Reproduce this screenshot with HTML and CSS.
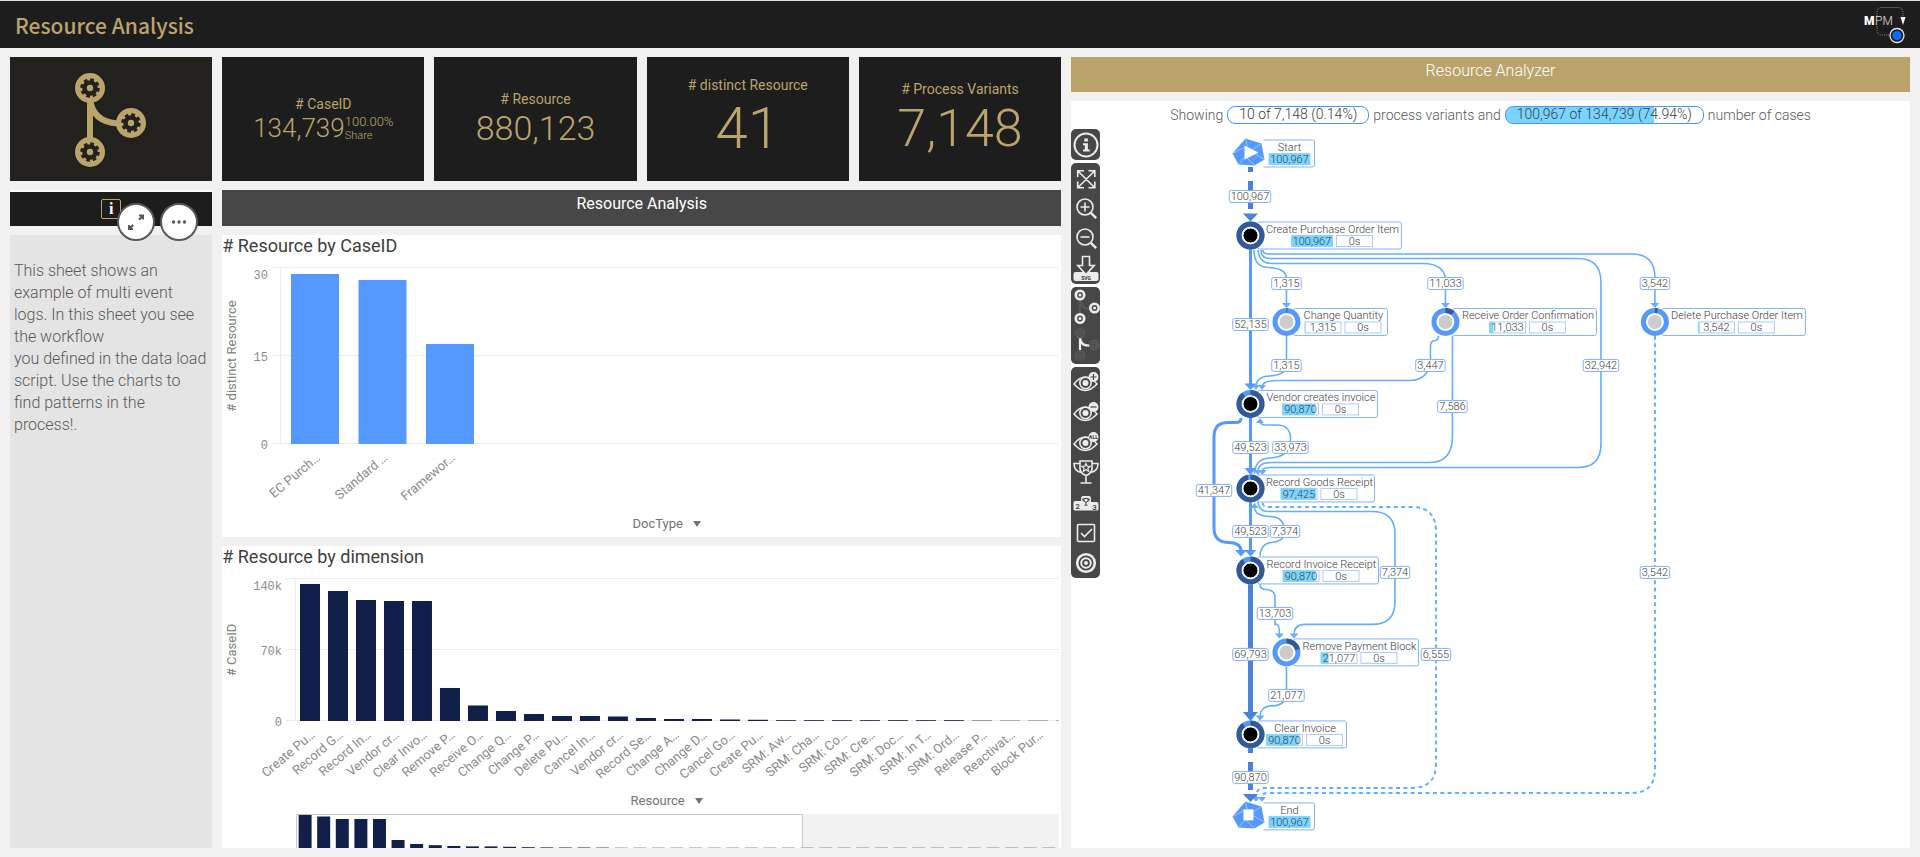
FILE: index.html
```html
<!DOCTYPE html>
<html lang="en">
<head>
<meta charset="utf-8">
<title>Resource Analysis</title>
<link rel="stylesheet" href="styles.css">
</head>
<body>
<header class="topbar">
  <h1 class="topbar-title">Resource Analysis</h1>
  <svg class="brand" width="44" height="40" viewBox="1862 4 44 40" role="img" aria-label="MPM">
    <path class="brand-frame" d="M1877 15V11Q1877 6.500 1882 6.500H1898Q1903 6.500 1903 12V17M1877 25V29Q1877 34 1882 34H1889"/>
    <text class="brand-bold" x="1864" y="24">M</text>
    <text class="brand-thin" x="1875" y="24">PM</text>
    <path fill="#fff" d="M1900.500 16h5l-2.500 8z"/>
    <circle cx="1897" cy="34.500" r="7" fill="#1d1d1d" stroke="#e8e8e8" stroke-width="1.300"/>
    <circle cx="1897" cy="34.500" r="4.600" fill="#0a6cff"/>
  </svg>
</header>

<main class="dashboard">
  <section class="side">
    <div class="logo-tile">
      <svg width="76" height="96" viewBox="73 70 76 96" aria-hidden="true">
        <defs>
          <g id="cog">
            <circle r="15" fill="#baa46c"/>
            <circle r="5.500" fill="none" stroke="#23211d" stroke-width="4.600"/>
            <circle r="8.300" fill="none" stroke="#23211d" stroke-width="3" stroke-dasharray="3.600 2.919"/>
          </g>
        </defs>
        <path d="M90 90V150M90 97Q92 121 118 122.500" fill="none" stroke="#baa46c" stroke-width="6"/>
        <use href="#cog" x="90" y="87"/>
        <use href="#cog" x="131" y="122"/>
        <use href="#cog" x="90" y="151"/>
      </svg>
    </div>
    <div class="info-tile">
      <span class="info-badge">i</span>
      <div class="hover-actions">
        <button class="round-button" type="button" aria-label="Full screen">
          <svg width="20" height="20" viewBox="0 0 20 20"><path fill="#595959" d="M13 2.500H18V7.500H16.800L15.800 6.500 13.800 8.500 12.300 7 14.200 5 13 3.800zM2 13H3.300L4.500 14 6.400 12.200 7.900 13.700 6 15.500 7.200 16.700V18H2z"/></svg>
        </button>
        <button class="round-button" type="button" aria-label="More">
          <svg width="20" height="20" viewBox="0 0 20 20" fill="#595959"><circle cx="4.500" cy="10" r="1.700"/><circle cx="10" cy="10" r="1.700"/><circle cx="15.500" cy="10" r="1.700"/></svg>
        </button>
      </div>
    </div>
    <p class="notes">This sheet shows an example of multi event logs. In this sheet you see the workflow<br>you defined in the data load script. Use the charts to find patterns in the process!.</p>
  </section>

  <section class="center">
    <div class="kpis">
      <div class="kpi">
        <span class="kpi-name"># CaseID</span>
        <div class="kpi-line"><span class="kpi-value kpi-s">134,739</span><span class="kpi-share"><span>100.00%</span><small>Share</small></span></div>
      </div>
      <div class="kpi"><span class="kpi-name"># Resource</span><span class="kpi-value kpi-m">880,123</span></div>
      <div class="kpi"><span class="kpi-name"># distinct Resource</span><span class="kpi-value kpi-xl">41</span></div>
      <div class="kpi"><span class="kpi-name"># Process Variants</span><span class="kpi-value kpi-l">7,148</span></div>
    </div>
    <div class="banner">Resource Analysis</div>
    <article class="chart">
      <h2 class="chart-title"># Resource by CaseID</h2>
      <svg id="doc-chart" class="plot" viewBox="222 261 839 255"></svg>
      <button class="axis-button" type="button">DocType <span class="caret"></span></button>
    </article>
    <article class="chart">
      <h2 class="chart-title"># Resource by dimension</h2>
      <svg id="dim-chart" class="plot" viewBox="222 572 839 220"></svg>
      <button class="axis-button axis-button-tight" type="button">Resource <span class="caret"></span></button>
      <svg id="navigator" class="plot" viewBox="222 814 839 34"></svg>
    </article>
  </section>

  <section class="analyzer">
    <div class="banner banner-gold">Resource Analyzer</div>
    <div class="process">
      <div class="summary">
        <span>Showing</span>
        <span class="pill">10 of 7,148 (0.14%)</span>
        <span>process variants and</span>
        <span class="pill pill-filled">100,967 of 134,739 (74.94%)</span>
        <span>number of cases</span>
      </div>
      <div class="process-body">
        <nav class="tools" aria-label="Process tools">
          <div class="tool-group">
            <button class="tool" type="button" aria-label="Info"><svg viewBox="0 0 28 28"><circle cx="14" cy="14" r="11.500" stroke-width="2"/><path class="solid" d="M12.300 7.500h3.600v3h-3.600zM11 12.200h4.900v6.300h1.800v2h-6.700v-2h1.800v-4.300H11z"/></svg></button>
          </div>
          <div class="tool-group">
            <button class="tool" type="button" aria-label="Fit"><svg viewBox="0 0 28 28"><path d="M6 6l16.500 16.500M22.500 6L6 22.500M5.700 12V5.700H12M16.500 5.700h6.300V12M22.800 16.500v6.300h-6.300M12 22.800H5.700v-6.300"/></svg></button>
            <button class="tool" type="button" aria-label="Zoom in"><svg viewBox="0 0 28 28"><circle cx="13" cy="12" r="8"/><path d="M8.500 12h9M13 7.500v9"/><path stroke-width="2.400" d="M18.800 17.800l5.400 5.400"/></svg></button>
            <button class="tool" type="button" aria-label="Zoom out"><svg viewBox="0 0 28 28"><circle cx="13" cy="12" r="8"/><path d="M8.500 12h9"/><path stroke-width="2.400" d="M18.800 17.800l5.400 5.400"/></svg></button>
            <button class="tool" type="button" aria-label="Download SVG"><svg viewBox="0 0 28 28"><rect class="solid" x="1.500" y="17" width="25" height="9" rx="2"/><path fill="#474747" d="M10.500 1.500h7v9h4.700L14 19.500 5.800 10.500h4.700z"/><text class="tool-caption" x="14" y="24.600">SVG</text></svg></button>
          </div>
          <div class="tool-group">
            <button class="tool tool-tall" type="button" aria-label="Activities"><svg viewBox="0 0 28 36"><path stroke="#5c5c5c" d="M8 10v14M8 12q2 8 10 8"/><g stroke-width="2.600"><circle cx="8" cy="6" r="4.200"/><circle cx="22.500" cy="19" r="4.200"/><circle cx="8" cy="29.500" r="4.200"/></g><g class="solid"><circle cx="8" cy="6" r="1.500"/><circle cx="22.500" cy="19" r="1.500"/><circle cx="8" cy="29.500" r="1.500"/></g></svg></button>
            <button class="tool tool-tall" type="button" aria-label="Transitions"><svg viewBox="0 0 28 36"><path stroke-width="2.200" d="M8 11v12M8 11q1 8 9.500 7.500"/><g stroke="#5c5c5c"><circle cx="8" cy="6" r="4.500"/><circle cx="22.500" cy="18" r="4.500"/><circle cx="8" cy="28.500" r="4.500"/><circle cx="8" cy="6" r="2"/><circle cx="22.500" cy="18" r="2"/><circle cx="8" cy="28.500" r="2"/></g></svg></button>
          </div>
          <div class="tool-group">
            <button class="tool" type="button" aria-label="Show"><svg viewBox="0 0 28 28"><path d="M2 15Q13 1 25 15 13 28 2 15z"/><circle cx="13.500" cy="14" r="5.700"/><circle class="solid" cx="13.500" cy="14" r="3"/><circle class="solid" cx="21.500" cy="8" r="5"/><path stroke="#474747" stroke-width="1.200" d="M18.500 8h6M21.500 5v6"/></svg></button>
            <button class="tool" type="button" aria-label="Hide"><svg viewBox="0 0 28 28"><path d="M2 15Q13 1 25 15 13 28 2 15z"/><circle cx="13.500" cy="14" r="5.700"/><circle class="solid" cx="13.500" cy="14" r="3"/><circle class="solid" cx="21.500" cy="8" r="5"/><path stroke="#474747" stroke-width="1.200" d="M18.500 8h6"/></svg></button>
            <button class="tool" type="button" aria-label="Show all"><svg viewBox="0 0 28 28"><path d="M2 15Q13 1 25 15 13 28 2 15z"/><circle cx="13.500" cy="14" r="5.700"/><circle class="solid" cx="13.500" cy="14" r="3"/><circle class="solid" cx="21.500" cy="8" r="5"/><text class="tool-caption" x="21.500" y="10">ALL</text></svg></button>
            <button class="tool" type="button" aria-label="Best variant"><svg viewBox="0 0 28 28"><path d="M8 2h12v8q-1 5-6 6.500Q9 15 8 10zM8 4.500H2q0 8 7.500 9M20 4.500h6q0 8-7.500 9M14 16.500V24M8.500 24h11"/><path stroke-width="1.200" d="M14 4.500l1.200 2.600 2.900.3-2.200 1.900.7 2.900-2.600-1.500-2.600 1.500.7-2.900-2.200-1.900 2.900-.3z"/></svg></button>
            <button class="tool" type="button" aria-label="Ranking"><svg viewBox="0 0 28 28"><path class="solid" d="M3 12H9V10Q9 7 11 7H17Q19 7 19 10V13H25Q26.500 13 26.500 15V20Q26.500 21.500 25 21.500H3Q1.500 21.500 1.500 20V14Q1.500 12 3 12z"/><path stroke="#474747" stroke-width="1" d="M12 9.500h4v2.500q-2 3-4 0zM12 10h-1.500q0 2 2 2.500M16 10h1.500q0 2-2 2.500M14 13.500V16M12.500 16.200h3"/><text class="tool-digit" x="5.500" y="20">2</text><text class="tool-digit" x="22.500" y="20.500">3</text></svg></button>
            <button class="tool" type="button" aria-label="Select"><svg viewBox="0 0 28 28"><rect x="5.500" y="5.500" width="17" height="17" rx="1"/><path d="M9 14l3.500 3.500L20 10"/></svg></button>
            <button class="tool" type="button" aria-label="Target"><svg viewBox="0 0 28 28"><circle cx="14" cy="14" r="8.800" stroke-width="2.600"/><circle cx="14" cy="14" r="4.800" stroke-width="2"/><circle class="solid" cx="14" cy="14" r="2"/></svg></button>
          </div>
        </nav>
        <svg id="graph" class="graph" viewBox="1100 129 810 719"></svg>
      </div>
    </div>
  </section>
</main>
<script src="script.js"></script>
</body>
</html>
```
FILE: styles.css
```css
* { box-sizing: border-box; }
body {
  margin: 0;
  min-height: 100vh;
  background: #f1f1f1;
  color: #595959;
  font-family: Roboto, "Liberation Sans", sans-serif;
  font-weight: 300;
}
button { font: inherit; color: inherit; padding: 0; border: 0; background: none; cursor: pointer; }
svg { display: block; }

.topbar {
  display: flex;
  align-items: center;
  justify-content: space-between;
  height: 48px;
  padding: 0 14px 0 15px;
  border-top: 1px solid #dcdfdf;
  background: #1d1d1d;
}
.topbar-title {
  margin: 0;
  color: #baa46c;
  font: 500 21px/30px "Noto Sans CJK JP", "Noto Sans", sans-serif;
}
.brand-frame { fill: none; stroke: #8a8a8a; stroke-width: 1; stroke-dasharray: 1 1; }
.brand-bold { font-size: 12px; font-weight: 900; fill: #fff; }
.brand-thin { font-size: 12px; font-weight: 300; fill: #e0e0e0; }

.dashboard {
  display: grid;
  grid-template-columns: repeat(9, minmax(0, 1fr));
  gap: 10px;
  padding: 9px 10px;
}
.side, .center, .analyzer { display: flex; flex-direction: column; gap: 9px; }
.center, .analyzer { grid-column: span 4; }

.logo-tile {
  display: flex;
  align-items: center;
  justify-content: center;
  height: 124px;
  background: #23211d;
}
.info-tile {
  position: relative;
  display: flex;
  justify-content: center;
  height: 36px;
  padding-top: 7px;
  border-top: 2px solid #fbfbfb;
  background: #1d1d1d;
}
.info-badge {
  width: 20px;
  height: 20px;
  border: 1px solid #baa46c;
  border-radius: 2px;
  color: #fff;
  font: 700 16px/18px "Liberation Serif", serif;
  text-align: center;
}
.hover-actions { position: absolute; top: 11px; right: 14px; display: flex; gap: 5px; }
.round-button {
  display: flex;
  align-items: center;
  justify-content: center;
  width: 38px;
  height: 38px;
  border: 2px solid #595959;
  border-radius: 50%;
  background: #fff;
}
.notes {
  flex: 1;
  margin: 0;
  padding: 25px 4px;
  background: #e4e4e4;
  font-size: 16px;
  line-height: 22px;
}

.kpis { display: grid; grid-template-columns: repeat(4, minmax(0, 1fr)); gap: 10px; }
.kpi {
  display: flex;
  flex-direction: column;
  align-items: center;
  justify-content: center;
  height: 124px;
  background: #1d1d1d;
  color: #baa46c;
}
.kpi-name { font-size: 14px; line-height: 18px; font-weight: 400; }
.kpi-line { display: flex; align-items: center; }
.kpi-s { font-size: 26px; }
.kpi-m { font-size: 34px; }
.kpi-l { font-size: 52px; }
.kpi-xl { font-size: 58px; }
.kpi-share { display: flex; flex-direction: column; font-size: 13px; line-height: 14px; }
.kpi-share small { font-size: 11px; line-height: 13px; }

.banner {
  height: 36px;
  padding-top: 4px;
  background: #474747;
  color: #fff;
  font-size: 16px;
  line-height: 20px;
  font-weight: 400;
  text-align: center;
}
.banner-gold { height: 35px; background: #baa46c; font-weight: 300; }

.chart { display: flex; flex-direction: column; background: #fff; }
.chart-title {
  height: 26px;
  margin: 0;
  color: #404040;
  font-size: 18px;
  line-height: 22px;
  font-weight: 400;
}
.plot { width: 100%; height: auto; }
.axis-button {
  display: flex;
  align-items: center;
  align-self: center;
  gap: 10px;
  height: 16px;
  margin-bottom: 5px;
  padding-left: 50px;
  color: #737373;
  font-size: 13px;
  line-height: 16px;
  font-weight: 400;
}
.axis-button-tight { height: 18px; margin-bottom: 4px; }
.caret { border: 4px solid transparent; border-top: 6px solid #737373; border-bottom: 0; }
.grid-line { stroke: #ececec; }
.axis-number { fill: #8c8c8c; font: 400 12px "Liberation Mono", monospace; text-anchor: end; }
.axis-label { fill: #8c8c8c; font-size: 13px; font-weight: 400; text-anchor: end; }
.axis-title { fill: #808080; font-size: 13px; font-weight: 400; text-anchor: middle; }
.bar-blue { fill: #5599ff; }
.bar-navy { fill: #10204a; }

.process { flex: 1; background: #fff; }
.summary {
  display: flex;
  align-items: center;
  justify-content: center;
  gap: 4px;
  height: 28px;
  font-size: 14px;
}
.pill {
  height: 18px;
  padding: 0 11px;
  border: 1px solid #4d94f7;
  border-radius: 8px;
  color: #404040;
  line-height: 15px;
}
.pill-filled { background: linear-gradient(90deg, #77d5ff 75%, #fff 75%); }
.process-body { display: flex; align-items: flex-start; }
.tools { display: flex; flex-direction: column; gap: 3px; width: 29px; flex: none; }
.tool-group {
  display: flex;
  flex-direction: column;
  align-items: center;
  padding-top: 1px;
  border-radius: 5px;
  background: #474747;
}
.tool { width: 29px; height: 30px; display: flex; align-items: center; justify-content: center; }
.tool-tall { height: 38px; }
.tool svg { width: 28px; fill: none; stroke: #ececec; stroke-width: 1.6px; }
.tool .solid { fill: #ececec; stroke: none; }
.tool-caption { fill: #333; stroke: none; font-size: 5px; font-weight: 700; text-anchor: middle; }
.tool-digit { fill: #333; stroke: none; font-size: 8px; font-weight: 500; text-anchor: middle; }

.graph { flex: 1; min-width: 0; height: auto; }
.edge { fill: none; stroke: #64aeff; stroke-width: 1.6px; }
.edge-dotted { stroke-dasharray: 4 3.4; stroke-width: 2px; }
.edge-mid { stroke: #5599ff; stroke-width: 3px; }
.edge-heavy { stroke: #4a82da; stroke-width: 5px; }
.head { fill: #64aeff; }
.head-mid { fill: #5599ff; }
.head-heavy { fill: #4a82da; }
.card { fill: #fff; stroke: #7fb2ff; }
.value-box { fill: #fff; stroke: #a9ccff; }
.value-fill { fill: #77d5ff; }
.graph-text { fill: #404040; font-size: 11px; text-anchor: middle; }
.ring { fill: none; stroke: #5599ff; stroke-width: 5px; }
.ring-share { fill: none; stroke: #335a98; stroke-width: 5px; }
.core-dark { fill: #000; stroke: #fff; }
.core-light { fill: #ccc; stroke: #fff; }
.gem { fill: #5599ff; }
.gem-lines { fill: none; stroke: #9cc6ff; stroke-width: 1px; }
.gem-mark { fill: #fff; }
```
FILE: script.js
```js
const el = (tag, attrs, text) => {
  const a = Object.entries(attrs).map(([k, v]) => `${k}="${v}"`).join(" ");
  return `<${tag} ${a}>${text === undefined ? "" : text}</${tag}>`;
};

/* Bar charts */
function barChart(id, o) {
  let s = "";
  o.ticks.forEach(([y, label, ty]) => {
    s += el("line", { class: "grid-line", x1: o.tickX, x2: 1059, y1: y, y2: y });
    s += el("text", { class: "axis-number", x: o.tickX - 4, y: ty }, label);
  });
  s += el("line", { class: "grid-line", x1: o.axisX, x2: o.axisX, y1: o.ticks[0][0], y2: o.base });
  s += el("text", { class: "axis-title", transform: `translate(236 ${o.titleY}) rotate(-90)` }, o.title);
  o.bars.forEach(([label, h], i) => {
    const x = o.x0 + o.step * i;
    s += el("rect", { class: o.cls, x, y: o.base - h, width: Math.min(o.w, 1059 - x), height: h });
    s += el("text", { class: "axis-label", transform: `translate(${x + o.w / 2 + 6} ${o.base + 15}) rotate(-40)` }, label);
  });
  document.getElementById(id).innerHTML = s;
}

barChart("doc-chart", {
  ticks: [[267.5, "30", 279], [355.5, "15", 361], [443.5, "0", 449]],
  tickX: 272, axisX: 280.5, base: 444, title: "# distinct Resource", titleY: 356,
  x0: 291, step: 67.5, w: 48, cls: "bar-blue",
  bars: [["EC Purch…", 170], ["Standard …", 164], ["Framewor…", 100]]
});

barChart("dim-chart", {
  ticks: [[578.5, "140k", 590], [649.5, "70k", 655], [720.5, "0", 726]],
  tickX: 286, axisX: 295.5, base: 721, title: "# CaseID", titleY: 650,
  x0: 300, step: 28, w: 20, cls: "bar-navy",
  bars: [["Create Pu…", 137], ["Record G…", 130], ["Record In…", 121], ["Vendor cr…", 120], ["Clear Invo…", 120],
    ["Remove P…", 33], ["Receive O…", 15.5], ["Change Q…", 10], ["Change P…", 7], ["Delete Pu…", 5], ["Cancel In…", 5],
    ["Vendor cr…", 4.5], ["Record Se…", 3], ["Change A…", 2], ["Change D…", 2], ["Cancel Go…", 1.5], ["Create Pu…", 1.2],
    ["SRM: Aw…", 0.8], ["SRM: Cha…", 0.8], ["SRM: Co…", 0.8], ["SRM: Cre…", 0.8], ["SRM: Doc…", 0.8], ["SRM: In T…", 0.8],
    ["SRM: Ord…", 0.8], ["Release P…", 0.4], ["Reactivat…", 0.3], ["Block Pur…", 0.3], ["", 0.3]]
});

(function navigator() {
  const heights = [33, 31.5, 29, 29, 29, 8, 4, 2.8, 2, 1.6, 1.6, 1.2, 0.8, 0.6, 0.5, 0.5, 0.4];
  let s = '<rect x="803" y="814" width="256" height="34" fill="#f2f2f2"/>';
  for (let i = 0; i < 41; i++) {
    const h = heights[i] || 0.25;
    s += el("rect", { class: "bar-navy", x: 298.5 + i * 18.6, y: 848 - h, width: 13, height: h });
  }
  s += '<path d="M296.500 848V814.500H802.500V848" fill="none" stroke="#c4c4c4"/>';
  document.getElementById("navigator").innerHTML = s;
})();

/* Process graph */
const edges = [
  ["", "M1254 250C1254 263 1260 267.500 1269 267.500C1280 268 1286.500 271 1286.500 279V304"],
  ["", "M1258 250Q1259 263.500 1272 263.500H1423Q1443 263.500 1445.500 278V304"],
  ["", "M1261 250Q1261 258.500 1270 258.500H1578Q1601 258.500 1601 282V444Q1601 467.500 1578 467.500H1270Q1263 467.500 1262 471"],
  ["", "M1263 250Q1263 254 1268 254H1632Q1655 254 1655 278V304"],
  ["", "M1286.500 336V366Q1286 375 1269 376Q1256.500 376.500 1256 387"],
  ["", "M1438.500 336Q1438.500 340 1435 340.500Q1430.500 341 1430.500 346V362Q1428 380.500 1410 380.500H1276Q1262 381 1262 387"],
  ["", "M1452.500 336V436Q1452.500 462.500 1430 462.500H1272Q1258 462.500 1258 471"],
  ["", "M1254.500 474Q1255 458.500 1270 458Q1290.500 457 1290.500 440Q1291 425 1277 425H1266Q1260 425 1260 421"],
  ["", "M1260 556Q1261 543 1272 542.500Q1284.500 541 1284.500 532Q1284.500 516.500 1270 516.500Q1254.500 516 1254.500 507"],
  ["", "M1258 502Q1259 511.500 1268 511.500H1372Q1395 511.500 1395 534V602Q1395 624.500 1372 624.500H1305Q1294 624.500 1294 635"],
  ["", "M1260 584Q1260 589.500 1266 589.500Q1275 590 1275 598V624.500H1277Q1279.500 625 1279.500 635"],
  ["", "M1286.500 667V697Q1284 706 1270 706Q1260 707 1260 717"],
  ["edge-dotted", "M1262.500 503Q1263 507 1268 507H1412Q1436 507 1436 532V764Q1436 788 1412 788H1264Q1256 788.500 1256 797"],
  ["edge-dotted", "M1655 336V769Q1655 793 1632 793H1268Q1262 793 1261 798"],
  ["edge-mid", "M1250.500 249V385"],
  ["edge-mid", "M1250.500 417V469"],
  ["edge-mid", "M1250.500 502V551"],
  ["edge-mid", "M1241 418Q1241 422.500 1236 422.500H1228Q1214 422.500 1214 437V528Q1214 542.500 1229 542.500Q1241 543 1241 551"],
  ["edge-heavy", "M1250.500 167V172M1250.500 181V209"],
  ["edge-heavy", "M1250.500 584V714"],
  ["edge-heavy", "M1250.500 748V753M1250.500 762V790"]
];
/* tip x, tip y, half width, height (negative points up), class suffix */
const heads = [
  [1286.5, 308, 4.5, 5], [1445.5, 308, 4.5, 5], [1655, 308, 4.5, 5], [1256, 390, 4, 5], [1262, 390, 4, 5],
  [1258, 475, 4, 5], [1262.5, 475, 4, 5], [1260, 418, 4, -5], [1254.5, 503, 4, -5], [1294, 638.5, 4.5, 5],
  [1279.5, 638.5, 4.5, 5], [1260, 720.5, 4.5, 5], [1256, 802, 4, 5], [1262, 802, 4, 5],
  [1250.5, 390, 6, 6.5, "mid"], [1250.5, 475, 6, 7, "mid"], [1250.5, 556.5, 6, 6.5, "mid"], [1241, 556.5, 6, 6.5, "mid"],
  [1250.5, 221.5, 7.5, 8, "heavy"], [1250.5, 721, 7.5, 9, "heavy"], [1250.5, 802, 7.5, 8, "heavy"]
];
const labels = [
  [1250, 196.5, "100,967"], [1286.5, 283.5, "1,315"], [1445.5, 283.5, "11,033"], [1655, 283.5, "3,542"],
  [1250.5, 324.5, "52,135"], [1286.5, 365.5, "1,315"], [1430.5, 365.5, "3,447"], [1601, 365.5, "32,942"],
  [1452.5, 406.5, "7,586"], [1250.5, 447.5, "49,523"], [1290.5, 447.5, "33,973"], [1214, 490.5, "41,347"],
  [1250.5, 531.5, "49,523"], [1285, 531.5, "7,374"], [1395, 572.5, "7,374"], [1655, 572.5, "3,542"],
  [1275, 613.5, "13,703"], [1250.5, 654.5, "69,793"], [1436, 654.5, "6,555"], [1286.5, 695.5, "21,077"], [1250.5, 777.5, "90,870"]
];
/* circle x, centre y, card right, text centre, name, value, share */
const nodes = [
  [1250.5, 153.5, 1314.5, 1289.5, "Start", "100,967", 1],
  [1250.5, 235.5, 1401.5, 1332.5, "Create Purchase Order Item", "100,967", 1],
  [1286.5, 322, 1387.5, 1343.5, "Change Quantity", "1,315", 0.013],
  [1445.5, 322, 1596.5, 1528, "Receive Order Confirmation", "11,033", 0.11],
  [1655, 322, 1805.5, 1737, "Delete Purchase Order Item", "3,542", 0.035],
  [1250.5, 404, 1377.5, 1321, "Vendor creates invoice", "90,870", 0.9],
  [1250.5, 488.5, 1374.5, 1319.5, "Record Goods Receipt", "97,425", 0.965],
  [1250.5, 570.5, 1378.5, 1321.5, "Record Invoice Receipt", "90,870", 0.9],
  [1286.5, 652.5, 1418.5, 1359.5, "Remove Payment Block", "21,077", 0.21],
  [1250.5, 734.5, 1346.5, 1305, "Clear Invoice", "90,870", 0.9],
  [1250.5, 816.5, 1314.5, 1289.5, "End", "100,967", 1]
];

let g = "";
edges.forEach(([c, d]) => { g += el("path", { class: `edge ${c}`, d }); });
heads.forEach(([x, y, w, h, c]) => {
  g += el("path", { class: c ? `head-${c}` : "head", d: `M${x - w} ${y - h}H${x + w}L${x} ${y}z` });
});
labels.forEach(([x, y, t]) => {
  const w = t.length * 6 - 0.5;
  g += el("rect", { class: "card", x: x - w / 2, y: y - 6, width: w, height: 12, rx: 2 });
  g += el("text", { class: "graph-text", x, y: y + 4 }, t);
});
nodes.forEach(([x, y, right, cx, name, value, share]) => {
  const terminal = name === "Start" || name === "End";
  const w = value.length > 6 ? 41 : 36;
  const bx = terminal ? cx - w / 2 : cx - (w + 41) / 2;
  g += el("rect", { class: "card", x: x + 7, y: y - 13.5, width: right - x - 7, height: 27, rx: 2 });
  g += el("rect", { class: "value-box", x: bx, y, width: w, height: 11 });
  g += el("rect", { class: "value-fill", x: bx, y, width: w * share, height: 11 });
  g += el("text", { class: "graph-text", x: cx, y: y - 2.5 }, name);
  g += el("text", { class: "graph-text", x: bx + w / 2, y: y + 9.5 }, value);
  if (terminal) {
    const gy = y - 1;
    g += el("rect", { x: x + 5, y: y - 15, width: 8, height: 30, fill: "#fff" });
    g += el("path", { class: "gem", d: `M${x - 18} ${gy + 1}L${x - 5} ${gy - 14}L${x + 11} ${gy - 9}L${x + 14} ${gy + 7}L${x + 4} ${gy + 13}L${x - 12} ${gy + 12}z` });
    g += el("path", { class: "gem-lines", d: `M${x - 5} ${gy - 14}L${x - 2} ${gy}L${x + 11} ${gy - 9}M${x - 18} ${gy + 1}L${x - 6} ${gy - 5}L${x + 14} ${gy + 7}M${x - 12} ${gy + 12}L${x - 5} ${gy + 4}L${x + 4} ${gy + 13}` });
    g += name === "Start"
      ? el("path", { class: "gem-mark", d: `M${x - 6} ${gy - 7}L${x + 8} ${gy}L${x - 6} ${gy + 7}z` })
      : el("rect", { class: "gem-mark", x: x - 7, y: gy - 6, width: 10, height: 11 });
    return;
  }
  const dark = share > 0.5;
  g += el("rect", { class: "value-box", x: bx + w + 4, y, width: 36, height: 11 });
  g += el("text", { class: "graph-text", x: bx + w + 22, y: y + 9.5 }, "0s");
  g += el("circle", { cx: x, cy: y, r: 14, fill: "#fff" });
  g += el("circle", { class: "ring", cx: x, cy: y, r: 11.5 });
  g += el("circle", { class: "ring-share", cx: x, cy: y, r: 11.5, pathLength: 100, "stroke-dasharray": `${share * 100} 100`, transform: `rotate(-90 ${x} ${y})` });
  g += el("circle", { class: dark ? "core-dark" : "core-light", cx: x, cy: y, r: 7.5 });
});
document.getElementById("graph").innerHTML = g;
```
